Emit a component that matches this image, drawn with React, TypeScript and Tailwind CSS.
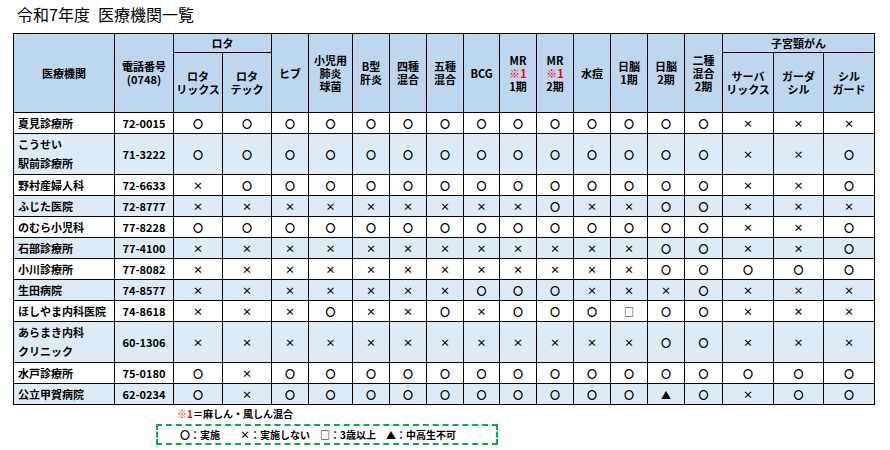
const SYM: Record<string, string> = { O: "〇", X: "×", S: "□", T: "▲" };

const widths = [101, 59, 49, 49, 37, 44, 37, 37, 37, 36, 37, 37, 37, 37, 37, 38, 51, 50, 51];

const rows = [
  { name: ["夏見診療所"], tel: "72-0015", v: "OOOOOOOOOOOOOOXXX" },
  { name: ["こうせい", "駅前診療所"], tel: "71-3222", v: "OOOOOOOOOOOOOOXXO" },
  { name: ["野村産婦人科"], tel: "72-6633", v: "XOOOOOOOOOOOOOXXO" },
  { name: ["ふじた医院"], tel: "72-8777", v: "XXXXXXXXXOXXOOXXX" },
  { name: ["のむら小児科"], tel: "77-8228", v: "OOOOOOOOOOOOOOXXO" },
  { name: ["石部診療所"], tel: "77-4100", v: "XXXXXXXXXXXXOOXXO" },
  { name: ["小川診療所"], tel: "77-8082", v: "XXXXXXXXXXXXOOOOO" },
  { name: ["生田病院"], tel: "74-8577", v: "XXXXXXXOOOXXXOXXX" },
  { name: ["ほしやま内科医院"], tel: "74-8618", v: "XXXOXXOXOOOSOOXXX" },
  { name: ["あらまき内科", "クリニック"], tel: "60-1306", v: "XXXXXXXXXXXXOOXXX" },
  { name: ["水戸診療所"], tel: "75-0180", v: "OXOOOOOOOOOOOOOOO" },
  { name: ["公立甲賀病院"], tel: "62-0234", v: "OXOOOOOOOOOOTOXOO" },
];

const th = "border border-black bg-[#bdd7ee] font-bold text-center align-middle leading-[13px] p-0";

function Lines({ t }: { t: string[] }) {
  return (
    <>
      {t.map((l, i) => (
        <div key={i}>{l}</div>
      ))}
    </>
  );
}

function MR({ n }: { n: string }) {
  return (
    <>
      <div>MR</div>
      <div className="text-[#ff0000]">※1</div>
      <div>{n}</div>
    </>
  );
}

export default function App() {
  return (
    <div
      className="w-[890px] h-[450px] bg-white pl-[13px] pt-[4px] text-black"
      style={{ fontFamily: '"Noto Sans CJK JP", "Noto Sans", sans-serif' }}
    >
      <div className="pl-[4px] text-[16px] leading-[20px]">令和7年度{"\u2002"}医療機関一覧</div>

      <table className="mt-[9px] table-fixed border-collapse text-[11px] w-[861px]">
        <colgroup>
          {widths.map((w, i) => (
            <col key={i} style={{ width: w }} />
          ))}
        </colgroup>
        <thead>
          <tr className="h-[19px]">
            <th rowSpan={2} className={th}>医療機関</th>
            <th rowSpan={2} className={th}>
              <Lines t={["電話番号", "(0748)"]} />
            </th>
            <th colSpan={2} className={th}>ロタ</th>
            <th rowSpan={2} className={th}>ヒブ</th>
            <th rowSpan={2} className={th}>
              <Lines t={["小児用", "肺炎", "球菌"]} />
            </th>
            <th rowSpan={2} className={th}>
              <Lines t={["B型", "肝炎"]} />
            </th>
            <th rowSpan={2} className={th}>
              <Lines t={["四種", "混合"]} />
            </th>
            <th rowSpan={2} className={th}>
              <Lines t={["五種", "混合"]} />
            </th>
            <th rowSpan={2} className={th}>BCG</th>
            <th rowSpan={2} className={th}>
              <MR n="1期" />
            </th>
            <th rowSpan={2} className={th}>
              <MR n="2期" />
            </th>
            <th rowSpan={2} className={th}>水痘</th>
            <th rowSpan={2} className={th}>
              <Lines t={["日脳", "1期"]} />
            </th>
            <th rowSpan={2} className={th}>
              <Lines t={["日脳", "2期"]} />
            </th>
            <th rowSpan={2} className={th}>
              <Lines t={["二種", "混合", "2期"]} />
            </th>
            <th colSpan={3} className={th}>子宮頸がん</th>
          </tr>
          <tr className="h-[60px]">
            <th className={th}>
              <Lines t={["ロタ", "リックス"]} />
            </th>
            <th className={th}>
              <Lines t={["ロタ", "テック"]} />
            </th>
            <th className={th}>
              <Lines t={["サーバ", "リックス"]} />
            </th>
            <th className={th}>
              <Lines t={["ガーダ", "シル"]} />
            </th>
            <th className={th}>
              <Lines t={["シル", "ガード"]} />
            </th>
          </tr>
        </thead>
        <tbody>
          {rows.map((r, i) => (
            <tr
              key={i}
              className={`${r.name.length > 1 ? "h-[41px]" : "h-[21px]"} ${i % 2 ? "bg-[#ddebf7]" : "bg-white"}`}
            >
              <td className="border border-black font-bold pl-[4px] leading-[19px] p-0">
                <Lines t={r.name} />
              </td>
              <td className="border border-black font-bold text-center p-0">{r.tel}</td>
              {r.v.split("").map((c, j) => (
                <td key={j} className="border border-black text-center p-0 text-[10px] font-bold">
                  {SYM[c]}
                </td>
              ))}
            </tr>
          ))}
        </tbody>
      </table>

      <div className="pl-[164px] mt-[2px] text-[10px] font-bold leading-[14px]">
        <span className="text-[#ff0000]">※1</span>＝麻しん・風しん混合
      </div>
      <div className="ml-[143px] mt-[3px] w-[342px] h-[21px] border-2 border-dashed border-[#00b050] flex items-center pl-[22px] text-[10px] font-bold">
        〇：実施　　×：実施しない　□：3歳以上　▲：中高生不可
      </div>
    </div>
  );
}
